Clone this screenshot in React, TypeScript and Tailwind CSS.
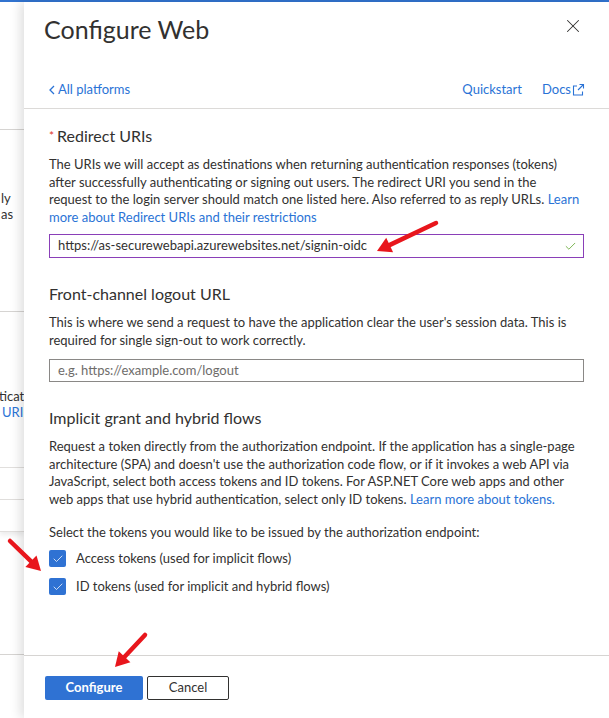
import { X, Check } from "lucide-react"

const font = { fontFamily: "Lato, 'Noto Sans', sans-serif" }

function Arrow({ x1, y1, x2, y2 }: { x1: number; y1: number; x2: number; y2: number }) {
  // red annotation arrow drawn over the screenshot
  const dx = x2 - x1
  const dy = y2 - y1
  const len = Math.hypot(dx, dy)
  const ux = dx / len
  const uy = dy / len
  const bx = x2 - ux * 14
  const by = y2 - uy * 14
  const nx = -uy
  const ny = ux
  const head = `${x2},${y2} ${bx + nx * 8},${by + ny * 8} ${bx - nx * 8},${by - ny * 8}`
  return (
    <g>
      <line x1={x1} y1={y1} x2={bx + ux * 2} y2={by + uy * 2} stroke="#e8161c" strokeWidth={4.5} strokeLinecap="round" />
      <polygon points={head} fill="#e8161c" />
    </g>
  )
}

function TokenCheckbox({ label }: { label: string }) {
  return (
    <label className="flex h-[28px] items-center gap-[10px]">
      <span className="flex h-[17px] w-[17px] items-center justify-center rounded-[2px] bg-[#2f72d3]">
        <Check className="h-[12px] w-[12px] text-white" strokeWidth={1.5} />
      </span>
      <span>{label}</span>
    </label>
  )
}

export default function App() {
  return (
    <div className="relative h-[718px] w-[609px] overflow-hidden bg-white text-[13px] text-[#323130]" style={font}>
      <div className="h-[2px] bg-[#3173cf]" />

      <div className="flex h-[716px]">
        {/* page behind the blade */}
        <div className="flex w-[24px] shrink-0 flex-col overflow-hidden whitespace-nowrap leading-[16px] text-[#323130]">
          <div className="h-[128px] shrink-0 border-b border-[#d6d4d2]" />
          <div className="h-[182px] shrink-0 border-b border-[#d6d4d2] pt-[60px] pl-[1px]">
            <div>ly</div>
            <div>as</div>
          </div>
          <div className="h-[156px] shrink-0 border-b border-[#e1dfdd] pt-[76px]">
            <div className="-ml-[1px]">ticat</div>
            <div className="ml-[2px] text-[#2a73d6]">URI</div>
          </div>
          <div className="h-[32px] shrink-0 border-b border-[#e1dfdd]" />
          <div className="h-[32px] shrink-0 border-b border-[#e1dfdd] shadow-[0_3px_5px_rgba(0,0,0,0.08)]" />
          <div className="h-[123px] shrink-0 border-b border-[#d6d4d2]" />
        </div>

        {/* blade */}
        <div className="relative flex flex-1 flex-col bg-white shadow-[-4px_0_10px_rgba(0,0,0,0.12)]">
          <div className="h-[107px] shrink-0 border-b border-[#dcdad8]">
            <div className="flex h-[32px] items-start justify-between pl-[20px] pr-[25px] mt-[11px]">
              <h1 className="text-[25px] font-normal leading-[32px] text-[#323130]">Configure Web</h1>
              <X className="mt-[2px] h-[22px] w-[22px] text-[#323130]" strokeWidth={1.1} />
            </div>
            <div className="mt-[35px] flex h-[20px] items-center justify-between pl-[25px] pr-[24px] text-[#2a73d6]">
              <div className="flex items-center gap-[3px]">
                <svg width="6" height="10" viewBox="0 0 6 10" fill="none" stroke="currentColor" strokeWidth="1.3">
                  <path d="M5 1L1 5l4 4" />
                </svg>
                <span>All platforms</span>
              </div>
              <div className="flex items-center gap-[20px]">
                <span>Quickstart</span>
                <span className="flex items-center">
                  Docs
                  <svg width="14" height="14" viewBox="0 0 14 14" fill="none" stroke="currentColor" strokeWidth="1.1">
                    <path d="M6 3H2.5v9h9V8.5" />
                    <path d="M7 7l5.5-5.5M8.5 1.5h4v4" />
                  </svg>
                </span>
              </div>
            </div>
          </div>

          <div className="flex-1 px-[25px]">
            <div className="mt-[16px] flex items-center text-[16px] leading-[22px]">
              <span className="mr-[3px] text-[12px] text-[#e0362b]">*</span>
              <span>Redirect URIs</span>
            </div>
            <p className="mt-[9px] whitespace-nowrap leading-[17.5px]">
              The URIs we will accept as destinations when returning authentication responses (tokens)
              <br />
              after successfully authenticating or signing out users. The redirect URI you send in the
              <br />
              request to the login server should match one listed here. Also referred to as reply URLs.{" "}
              <span className="text-[#2a73d6]">Learn</span>
              <br />
              <span className="text-[#2a73d6]">more about Redirect URIs and their restrictions</span>
            </p>
            <div className="mt-[8px] flex h-[24px] items-center justify-between border border-[#8a3fb8] pl-[8px] pr-[6px]">
              <span>https://as-securewebapi.azurewebsites.net/signin-oidc</span>
              <Check className="h-[13px] w-[13px] text-[#6aa93a]" strokeWidth={1.6} />
            </div>

            <div className="mt-[25px] text-[16px] leading-[22px]">Front-channel logout URL</div>
            <p className="mt-[9px] whitespace-nowrap leading-[17.5px]">
              This is where we send a request to have the application clear the user's session data. This is
              <br />
              required for single sign-out to work correctly.
            </p>
            <div className="mt-[10px] flex h-[23px] items-center border border-[#8a8886] pl-[8px] text-[#6e6c6a]">
              e.g. https://example.com/logout
            </div>

            <div className="mt-[25px] text-[16px] leading-[22px]">Implicit grant and hybrid flows</div>
            <p className="mt-[9px] whitespace-nowrap leading-[17.5px]">
              Request a token directly from the authorization endpoint. If the application has a single-page
              <br />
              architecture (SPA) and doesn't use the authorization code flow, or if it invokes a web API via
              <br />
              JavaScript, select both access tokens and ID tokens. For ASP.NET Core web apps and other
              <br />
              web apps that use hybrid authentication, select only ID tokens.{" "}
              <span className="text-[#2a73d6]">Learn more about tokens.</span>
            </p>

            <p className="mt-[16px] leading-[17.5px]">Select the tokens you would like to be issued by the authorization endpoint:</p>
            <div className="mt-[3px] flex flex-col">
              <TokenCheckbox label="Access tokens (used for implicit flows)" />
              <TokenCheckbox label="ID tokens (used for implicit and hybrid flows)" />
            </div>
          </div>

          <div className="flex h-[63px] shrink-0 items-start gap-[4px] border-t border-[#d6d4d2] pl-[21px] pt-[20px]">
            <button className="h-[24px] w-[98px] rounded-[2px] bg-[#2f72d3] text-[13px] font-bold text-white">Configure</button>
            <button className="h-[24px] w-[82px] rounded-[2px] border border-[#323130] bg-white text-[13px] text-[#323130]">Cancel</button>
          </div>
        </div>
      </div>

      <svg className="pointer-events-none absolute inset-0" width="609" height="718">
        <Arrow x1={436} y1={223} x2={377} y2={251} />
        <Arrow x1={10} y1={541} x2={41} y2={571} />
        <Arrow x1={145} y1={635} x2={115} y2={667} />
      </svg>
    </div>
  )
}
